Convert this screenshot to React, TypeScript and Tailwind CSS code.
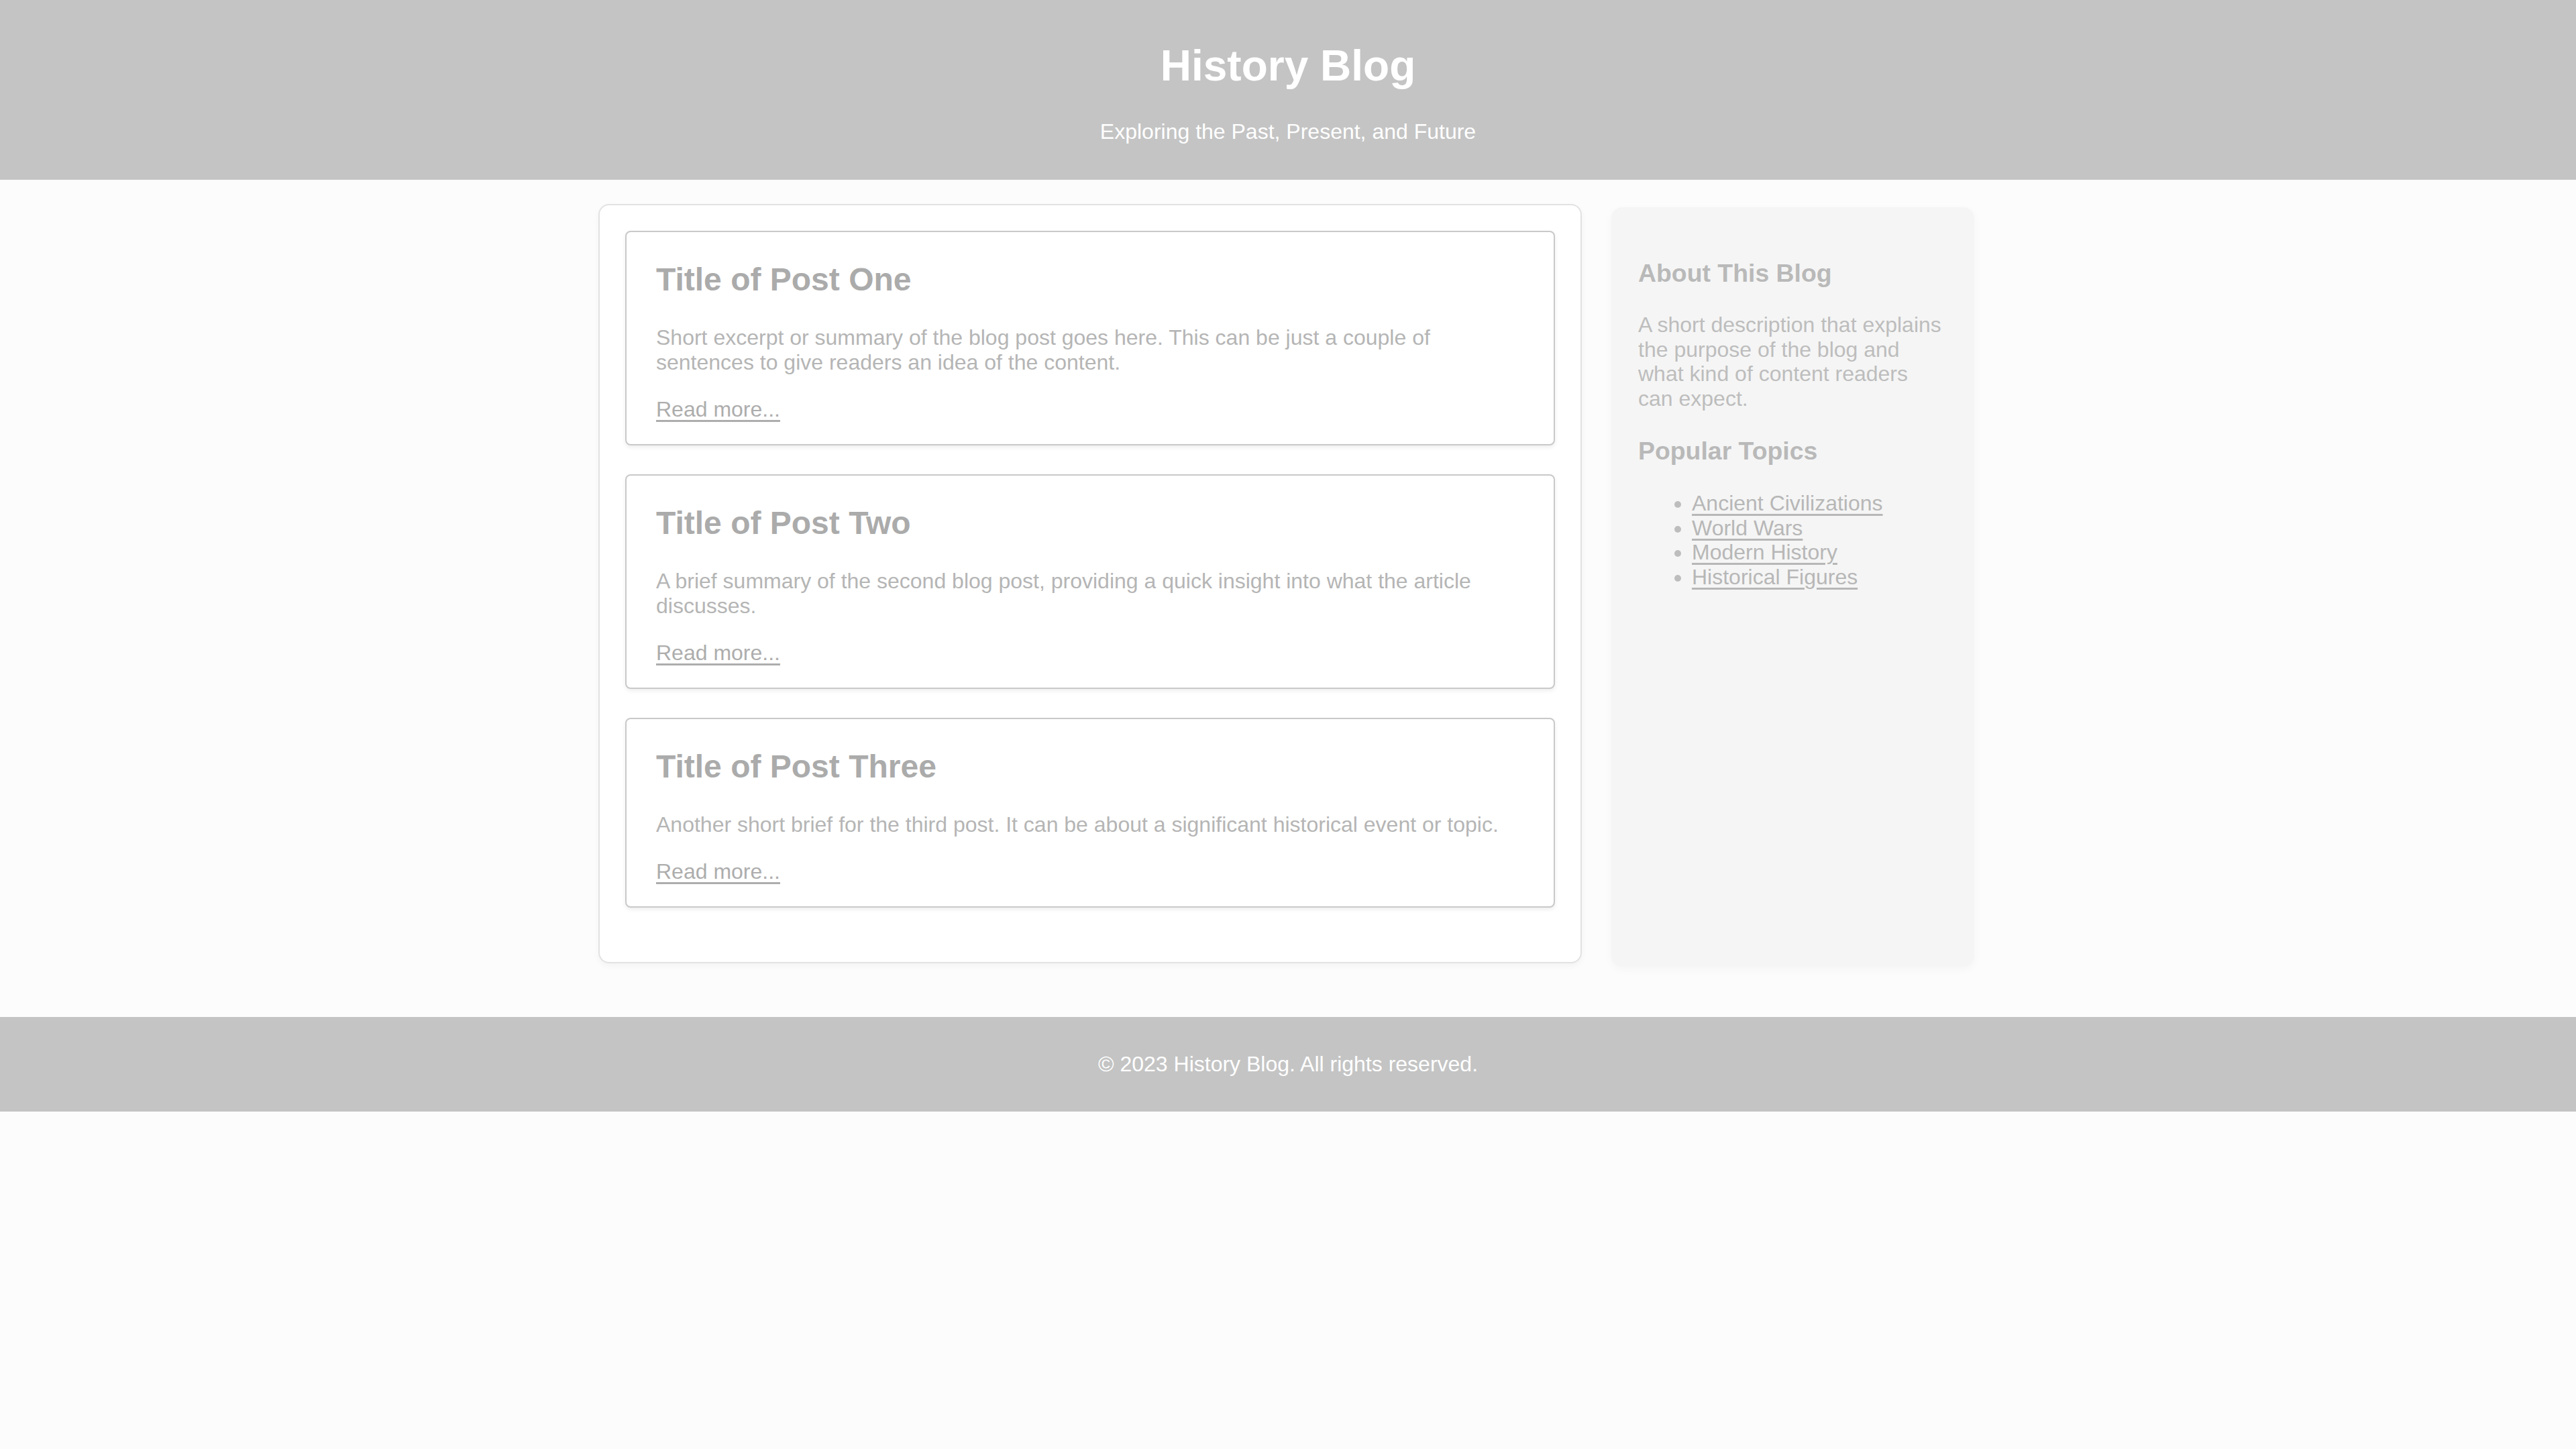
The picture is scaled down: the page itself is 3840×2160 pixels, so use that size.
const posts = [
  {
    title: "Title of Post One",
    excerpt:
      "Short excerpt or summary of the blog post goes here. This can be just a couple of sentences to give readers an idea of the content.",
  },
  {
    title: "Title of Post Two",
    excerpt:
      "A brief summary of the second blog post, providing a quick insight into what the article discusses.",
  },
  {
    title: "Title of Post Three",
    excerpt:
      "Another short brief for the third post. It can be about a significant historical event or topic.",
  },
];

const topics = ["Ancient Civilizations", "World Wars", "Modern History", "Historical Figures"];

function PostCard({ title, excerpt }: { title: string; excerpt: string }) {
  return (
    <article className="mb-[43px] rounded-[8px] border-2 border-[#c9c9c9] bg-white px-[44px] pt-[43px] pb-[33px] shadow-[0_3px_6px_rgba(0,0,0,0.07)]">
      <h2 className="text-[48px] leading-[55px] font-bold text-[#ababab]">{title}</h2>
      <p className="mt-[41px] text-[32px] leading-[37px] text-[#b5b5b5]">{excerpt}</p>
      <a href="#" className="mt-[33px] block w-fit text-[32px] leading-[37px] text-[#adadad] underline decoration-[3px] underline-offset-[5px]">
        Read more...
      </a>
    </article>
  );
}

export default function App() {
  return (
    <div className="min-h-[2160px] bg-[#fcfcfc] font-['Liberation_Sans',Arial,sans-serif]">
      <header className="flex flex-col items-center bg-[#c4c4c4] pt-[61px] pb-[53px] text-white">
        <h1 className="text-[64px] leading-[74px] font-bold">History Blog</h1>
        <p className="mt-[43px] text-[32px] leading-[37px]">Exploring the Past, Present, and Future</p>
      </header>

      <main className="mx-auto flex w-[2056px] items-stretch gap-[44px] pt-[36px] pb-[80px] pr-[5px]">
        <section className="w-[1466px] rounded-[16px] border-2 border-[#e2e2e2] bg-white p-[38px] pb-0 shadow-[0_4px_10px_rgba(0,0,0,0.04)]">
          {posts.map((p) => (
            <PostCard key={p.title} title={p.title} excerpt={p.excerpt} />
          ))}
          <div className="h-[38px]" />
        </section>

        <aside className="mt-[5px] mb-[-5px] w-[541px] rounded-[16px] bg-[#f5f5f5] px-[40px] pt-[40px] shadow-[0_4px_14px_rgba(0,0,0,0.03)]">
          <h3 className="mt-[37px] text-[37.4px] leading-[43px] font-bold text-[#b9b9b9]">About This Blog</h3>
          <p className="mt-[37px] text-[32px] leading-[36.7px] text-[#bdbdbd]">
            A short description that explains the purpose of the blog and what kind of content readers can expect.
          </p>
          <h3 className="mt-[38px] text-[37.4px] leading-[43px] font-bold text-[#b9b9b9]">Popular Topics</h3>
          <ul className="mt-[38px] list-disc pl-[80px] text-[32px] leading-[36.7px] text-[#bdbdbd]">
            {topics.map((t) => (
              <li key={t}>
                <a href="#" className="text-[#b7b7b7] underline decoration-[3px] underline-offset-[5px]">
                  {t}
                </a>
              </li>
            ))}
          </ul>
        </aside>
      </main>

      <footer className="bg-[#c4c4c4] py-[52px] text-center text-[32px] leading-[37px] text-white">
        <p>© 2023 History Blog. All rights reserved.</p>
      </footer>
    </div>
  );
}
